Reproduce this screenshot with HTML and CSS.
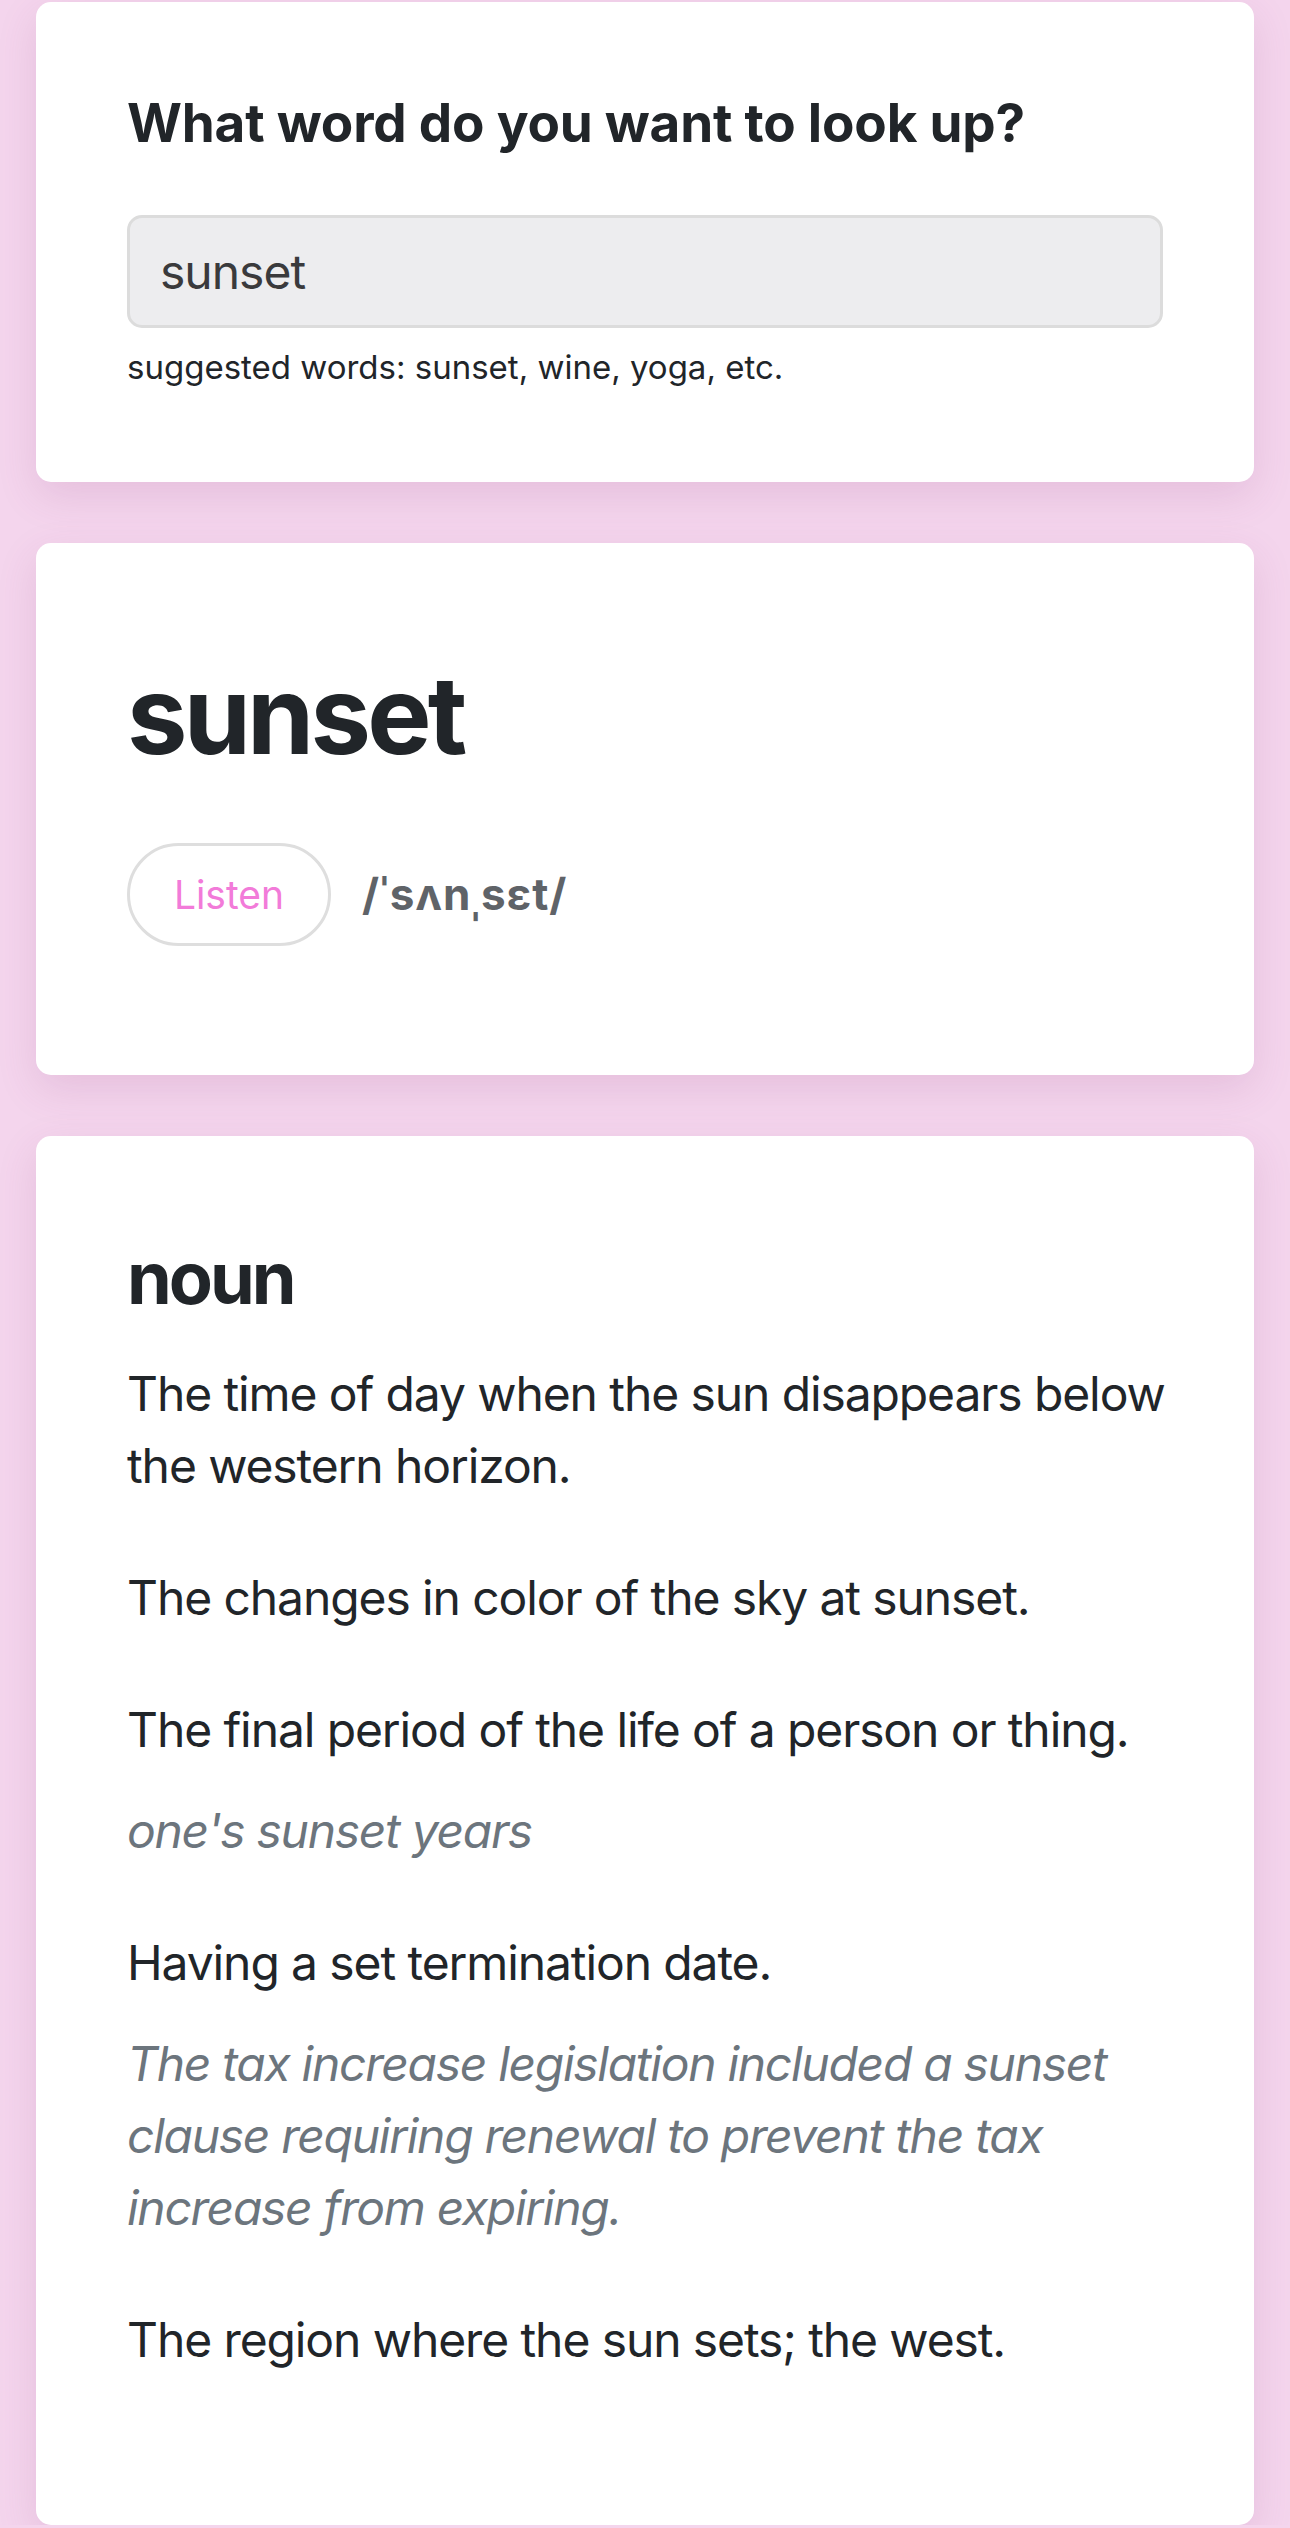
FILE: index.html
```html
<!DOCTYPE html>
<html lang="en">
<head>
<meta charset="utf-8">
<title>Dictionary</title>
<link rel="stylesheet" href="styles.css">
</head>
<body>
<main class="page">
  <section class="card search-card">
    <h2 class="search-title">What word do you want to look up?</h2>
    <input class="search-input" type="search" value="sunset">
    <p class="hint">suggested words: sunset, wine, yoga, etc.</p>
  </section>

  <section class="card word-card">
    <h1 class="word">sunset</h1>
    <div class="phonetic-row">
      <button class="listen-btn" type="button">Listen</button>
      <span class="phonetic">/ˈsʌnˌsɛt/</span>
    </div>
  </section>

  <section class="card meaning-card">
    <h3 class="pos">noun</h3>
    <ul class="defs">
      <li class="def">
        <p class="def-text">The time of day when the sun disappears below the western horizon.</p>
      </li>
      <li class="def">
        <p class="def-text">The changes in color of the sky at sunset.</p>
      </li>
      <li class="def">
        <p class="def-text">The final period of the life of a person or thing.</p>
        <p class="example">one's sunset years</p>
      </li>
      <li class="def">
        <p class="def-text">Having a set termination date.</p>
        <p class="example">The tax increase legislation included a sunset clause requiring renewal to prevent the tax increase from expiring.</p>
      </li>
      <li class="def">
        <p class="def-text">The region where the sun sets; the west.</p>
      </li>
    </ul>
  </section>
</main>
</body>
</html>
```

FILE: styles.css
```css
* {
  box-sizing: border-box;
}

html, body {
  margin: 0;
  padding: 0;
}

body {
  background: #f4d5ed;
  font-family: Inter, "Noto Sans", "DejaVu Sans", sans-serif;
  color: #212529;
}

.page {
  display: flex;
  flex-direction: column;
  gap: 61px;
  padding: 2px 36px 0;
}

.card {
  background: #ffffff;
  border-radius: 15px;
  padding: 90px 88px 90px 91px;
  box-shadow: 0 14px 40px rgba(140, 60, 120, 0.14);
}

/* Search card */
.search-title {
  margin: 0;
  font-size: 53px;
  font-weight: 700;
  line-height: 1.2;
  letter-spacing: -0.2px;
}

.search-input {
  display: block;
  width: calc(100% - 3px);
  height: 113px;
  margin: 59px 0 0;
  padding: 0 30px;
  font-family: inherit;
  font-size: 48px;
  letter-spacing: -1px;
  color: #3a3a3c;
  background: #ededef;
  border: 3px solid #dcdcdc;
  border-radius: 15px;
  outline: none;
  -webkit-appearance: none;
  appearance: none;
}

.hint {
  margin: 15px 0 0;
  font-size: 33px;
  line-height: 1.5;
  color: #212529;
}

/* Word card */
.word {
  margin: 17px 0 0;
  font-size: 108px;
  font-weight: 700;
  line-height: 1.2;
  letter-spacing: -3.8px;
}

.phonetic-row {
  display: flex;
  align-items: center;
  gap: 31px;
  margin: 63px 0 39px;
}

.listen-btn {
  height: 103px;
  width: 204px;
  padding: 0;
  font-family: inherit;
  font-size: 39px;
  color: #f27bd9;
  background: #ffffff;
  border: 3px solid #dedede;
  border-radius: 52px;
}

.phonetic {
  font-size: 44px;
  font-weight: 700;
  letter-spacing: 1px;
  color: #5f6368;
}

/* Meaning card */
.meaning-card {
  padding-bottom: 89px;
}

.pos {
  margin: 9px 0 0;
  font-size: 72px;
  font-weight: 700;
  line-height: 1.2;
  letter-spacing: -3px;
}

.defs {
  list-style: none;
  margin: 37px 0 0;
  padding: 0;
}

.def {
  margin-bottom: 60px;
}

.def-text {
  margin: 0;
  font-size: 48px;
  line-height: 1.5;
  letter-spacing: -1.1px;
}

.example {
  margin: 29px 0 0;
  font-size: 48px;
  line-height: 1.5;
  letter-spacing: -1.3px;
  font-style: italic;
  color: #6c757d;
}
```
